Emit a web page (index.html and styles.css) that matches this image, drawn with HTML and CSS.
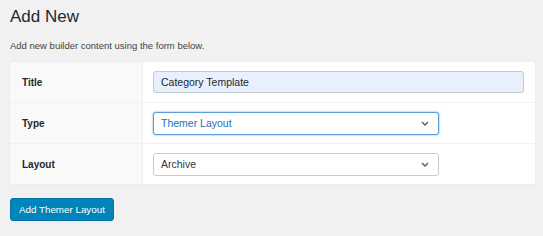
FILE: index.html
```html
<!DOCTYPE html>
<html lang="en">
<head>
    <meta charset="UTF-8">
    <link rel="stylesheet" href="styles.css">
    <title>Add New</title>
</head>
<body>
    <div class="wrap">
        <h1>Add New</h1>
        <p class="intro">Add new builder content using the form below.</p>

        <table class="form-table">
            <tr>
                <th>Title</th>
                <td><input type="text" class="field field-title" value="Category Template"></td>
            </tr>
            <tr>
                <th>Type</th>
                <td>
                    <div class="select focused">
                        <span>Themer Layout</span>
                        <svg width="8" height="5" viewBox="0 0 8 5"><path d="M1 1l3 3 3-3" fill="none" stroke="#666" stroke-width="1.5"/></svg>
                    </div>
                </td>
            </tr>
            <tr>
                <th>Layout</th>
                <td>
                    <div class="select">
                        <span>Archive</span>
                        <svg width="8" height="5" viewBox="0 0 8 5"><path d="M1 1l3 3 3-3" fill="none" stroke="#666" stroke-width="1.5"/></svg>
                    </div>
                </td>
            </tr>
        </table>

        <button class="button-primary">Add Themer Layout</button>
    </div>
</body>
</html>
```
FILE: styles.css
```css
body {
    margin: 0;
    background-color: #f1f1f1;
    font-family: 'Liberation Sans', Arial, sans-serif;
    color: #23282d;
}

.wrap {
    padding: 8px 8px 0 10px;
}

h1 {
    margin: 0;
    font-size: 17px;
    font-weight: 400;
    color: #23282d;
    line-height: 18px;
}

.intro {
    margin: 14px 0 0;
    font-size: 9.5px;
    color: #444;
    line-height: 12px;
}

.form-table {
    margin-top: 10px;
    width: 525px;
    border-collapse: collapse;
    background-color: #fff;
    box-shadow: 0 0 1px rgba(0, 0, 0, 0.12);
}

.form-table tr + tr th,
.form-table tr + tr td {
    border-top: 1px solid #f1f1f1;
}

.form-table th {
    width: 120px;
    padding: 0 0 0 12px;
    height: 40px;
    background-color: #f9f9f9;
    border-right: 1px solid #f1f1f1;
    text-align: left;
    font-size: 10px;
    font-weight: 700;
    color: #23282d;
}

.form-table td {
    padding: 0 10px;
}

.field {
    box-sizing: border-box;
    width: 371px;
    height: 22px;
    padding: 0 7px;
    border: 1px solid #c3c8ce;
    border-radius: 3px;
    font-family: inherit;
    font-size: 10.5px;
    color: #23282d;
    outline: none;
}

.field-title {
    background-color: #e8f0fe;
}

.select {
    box-sizing: border-box;
    display: flex;
    justify-content: space-between;
    align-items: center;
    width: 286px;
    height: 23px;
    padding: 0 9px 0 7px;
    border: 1px solid #c7cbd0;
    border-radius: 3px;
    background-color: #fff;
    font-size: 10.5px;
    color: #32373c;
}

.select.focused {
    border-color: #5b9dd9;
    box-shadow: 0 0 2px rgba(30, 140, 190, 0.8);
    color: #2271b1;
}

.button-primary {
    margin-top: 14px;
    height: 23px;
    padding: 0 8px;
    background-color: #0085ba;
    border: 1px solid #0073aa;
    border-radius: 3px;
    color: #fff;
    font-family: inherit;
    font-size: 9.8px;
}
```
